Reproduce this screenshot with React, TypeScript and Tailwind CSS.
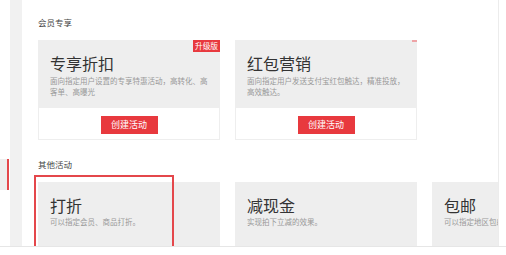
const font = { fontFamily: '"Noto Sans CJK SC", "Noto Sans", sans-serif' };

type Promo = { title: string; desc: string; badge?: boolean; ghost?: boolean };

const member: Promo[] = [
  { title: "专享折扣", desc: "面向指定用户设置的专享特惠活动，高转化、高客单、高曝光", badge: true },
  { title: "红包营销", desc: "面向指定用户发送支付宝红包触达，精准投放，高效触达。", ghost: true },
];

const others: Promo[] = [
  { title: "打折", desc: "可以指定会员、商品打折。" },
  { title: "减现金", desc: "实现拍下立减的效果。" },
  { title: "包邮", desc: "可以指定地区包邮。" },
];

function MemberCard({ item }: { item: Promo }) {
  return (
    <div className="relative w-[182px] shrink-0">
      <div className="h-[68px] bg-[#eeeeee] pl-[12px] pr-[12px] pt-[13px]">
        <div className="text-[16px] leading-[20px] text-[#333]">{item.title}</div>
        <p className="mt-[3px] text-[7.5px] leading-[10.7px] text-[#999]">{item.desc}</p>
      </div>
      <div className="h-[32px] border border-t-0 border-[#eeeeee] flex justify-center pt-[8px]">
        <button className="w-[57px] h-[18px] bg-[#e8393e] text-white text-[9px] leading-[18px]">
          创建活动
        </button>
      </div>
      {item.badge && (
        <span className="absolute top-0 right-0 w-[27px] h-[12px] bg-[#e8393e] text-white text-[7.7px] leading-[12px] text-center">
          升级版
        </span>
      )}
      {item.ghost && <span className="absolute top-0 right-0 w-[5px] h-[2px] bg-[#eea3a6]" />}
    </div>
  );
}

function OtherCard({ item, active }: { item: Promo; active?: boolean }) {
  return (
    <div className="relative w-[182px] h-[80px] shrink-0 bg-[#eeeeee] pl-[12px] pr-[12px] pt-[13px]">
      <div className="text-[16px] leading-[20px] text-[#333]">{item.title}</div>
      <p className="mt-[2px] text-[7.5px] leading-[10.7px] text-[#999] whitespace-nowrap">{item.desc}</p>
      {active && (
        <div className="absolute left-[-4px] top-[-7px] w-[140px] h-[90px] border-2 border-[#e4474b]" />
      )}
    </div>
  );
}

export default function App() {
  return (
    <div className="w-[506px] h-[255px] overflow-hidden bg-white flex flex-col" style={font}>
      <div className="flex h-[246px]">
        <aside className="w-[10px] shrink-0 pt-[159px]">
          <div className="w-[9px] h-[31px] bg-[#eeeeee] border-r-2 border-[#e4474b]" />
        </aside>
        <div className="w-[12px] shrink-0 bg-[#f1f1f1]" />
        <main className="w-[477px] shrink-0 border-r border-[#ececec] overflow-hidden pl-[16px] pt-[15px]">
          <h4 className="h-[14px] text-[8.5px] leading-[14px] text-[#444]">会员专享</h4>
          <div className="mt-[11px] flex gap-[15px]">
            {member.map((m) => (
              <MemberCard key={m.title} item={m} />
            ))}
          </div>
          <h4 className="mt-[17px] h-[14px] text-[8.5px] leading-[14px] text-[#444]">其他活动</h4>
          <div className="mt-[11px] flex gap-[15px]">
            {others.map((o, i) => (
              <OtherCard key={o.title} item={o} active={i === 0} />
            ))}
          </div>
        </main>
        <div className="flex-1" />
      </div>
      <div className="flex-1 border-t border-[#e6e6e6] bg-white" />
    </div>
  );
}
